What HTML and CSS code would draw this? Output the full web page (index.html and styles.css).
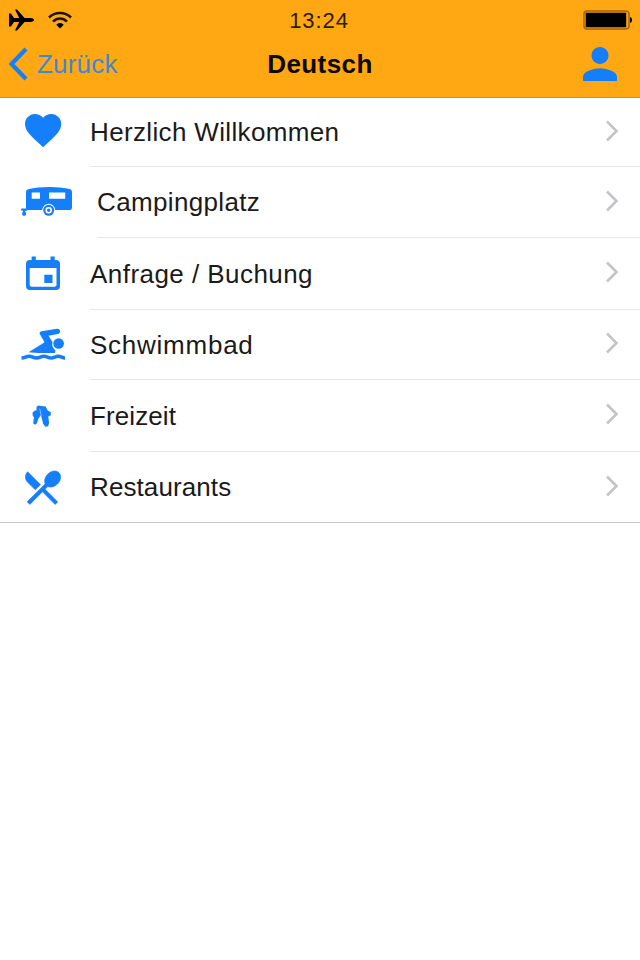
FILE: index.html
```html
<!DOCTYPE html>
<html lang="de">
<head>
    <meta charset="UTF-8">
    <meta name="viewport" content="width=device-width, initial-scale=1.0">
    <title>Deutsch</title>
    <link rel="stylesheet" href="styles.css">
</head>
<body>

<header class="header">
    <div class="status">
        <div class="status-left">
            <svg width="25" height="22" viewBox="0 0 25 22"><path d="M0 4.500h2l3 4.600h5.200L6 .5h2l7.600 8.600h6.400c2.600 0 3 1.900 3 1.900s-.4 1.900-3 1.900h-6.400L8 21.500H6l4.200-8.600H5l-3 4.600H0z"/></svg>
            <svg width="24" height="18" viewBox="0 0 24 18"><g fill="none" stroke="#1c1300" stroke-width="2.500"><path d="M1 6.500C7 .4 17 .4 23 6.500"/><path d="M5 10.600c4-4 10-4 14 0"/></g><path d="M12 17.500l-3.700-3.700c2.200-2.400 5.200-2.400 7.400 0z"/></svg>
        </div>
        <div class="time">13:24</div>
        <svg class="battery" width="50" height="20" viewBox="0 0 50 20"><rect x="1" y="1" width="45" height="18" rx="3" fill="none" stroke="#a96200" stroke-width="1.500"/><rect x="2.700" y="2.700" width="40.500" height="14.600" fill="#000"/><path d="M47 7c2.700.5 2.700 5.500 0 6z"/></svg>
    </div>
    <div class="navbar">
        <div class="back">
            <svg width="20" height="34" viewBox="0 0 20 34"><path d="M18 2L3.500 17 18 32" fill="none" stroke="#147efb" stroke-width="4.200"/></svg>
            <span>Zurück</span>
        </div>
        <div class="title">Deutsch</div>
        <svg class="user" width="34" height="34" viewBox="4 4 16 16"><path d="M12 12c2.210 0 4-1.790 4-4s-1.790-4-4-4-4 1.790-4 4 1.790 4 4 4zm0 2c-2.670 0-8 1.340-8 4v2h16v-2c0-2.660-5.330-4-8-4z"/></svg>
    </div>
</header>

<div class="list">
    <div class="row first">
        <svg class="icon" viewBox="0 0 90 70"><path transform="translate(21.400 10.600) scale(1.810)" d="M12 21.350l-1.450-1.320C5.400 15.360 2 12.280 2 8.500 2 5.420 4.420 3 7.500 3c1.740 0 3.410.81 4.500 2.090C13.090 3.810 14.760 3 16.500 3 19.580 3 22 5.420 22 8.500c0 3.780-3.400 6.860-8.550 11.540L12 21.350z"/></svg>
        <div class="content">
            <span class="label">Herzlich Willkommen</span>
            <svg class="chevron" viewBox="0 0 14 22"><path d="M2 1.500l9.500 9.500L2 20.500"/></svg>
        </div>
    </div>
    <div class="row camping">
        <svg class="icon" viewBox="0 0 90 70">
            <path fill-rule="evenodd" d="M26 25q0-2 2-2.700c12-3 30-3 42-.3q2 .8 2 3v15.500q0 2.500-2 2.500H28q-2 0-2-2zM31.700 25.500v6.200H40v-6.200zM49 25.500v6.200h16.200v-6.200z"/>
            <path d="M21.200 41.500h6v2.300h-2v1.400h.8V48l-2 1-1.800-1v-2.800h.8v-1.400h-1.800z"/>
            <circle cx="48.700" cy="43.300" r="6.500" fill="#fff"/>
            <circle cx="48.700" cy="43.300" r="5.500"/>
            <circle cx="48.700" cy="43.300" r="2.500" fill="#147efb" stroke="#fff" stroke-width="1.600"/>
        </svg>
        <div class="content">
            <span class="label">Campingplatz</span>
            <svg class="chevron" viewBox="0 0 14 22"><path d="M2 1.500l9.500 9.500L2 20.500"/></svg>
        </div>
    </div>
    <div class="row tall">
        <svg class="icon" viewBox="0 0 90 70"><path fill-rule="evenodd" d="M31.600 22v-3.500h4.200V22h14.700v-3.500h4.200V22H56q4 0 4 4v22q0 4-4 4H30q-4 0-4-4V26q0-4 4-4zM29.700 30v17q0 1.700 2 1.700h22.800q2 0 2-1.700V30zM44.300 36.700h8.200v8.400h-8.200z"/></svg>
        <div class="content">
            <span class="label wide">Anfrage / Buchung</span>
            <svg class="chevron" viewBox="0 0 14 22"><path d="M2 1.500l9.500 9.500L2 20.500"/></svg>
        </div>
    </div>
    <div class="row short">
        <svg class="icon" viewBox="0 0 90 70">
            <path d="M39.500 23.500q0-1.700 2-2.200l15.500-2.500c3.700-.4 4.200 4.600.8 5.300l-9.300 1.600 4 6.300c-.8 3.500 0 5.500 3 8.500l-.5 2.500H38l-9.500-.8 13-8 3-2z"/>
            <circle cx="58.600" cy="33.500" r="5.300"/>
            <path d="M21.500 48c4 0 4-1.700 7.500-1.700s4 1.700 7.500 1.700 4-1.700 7.300-1.700 4 1.700 7.300 1.700 4-1.700 7.200-1.700 3.500 1.700 6.700 1.700" fill="none" stroke="#147efb" stroke-width="3.600"/>
        </svg>
        <div class="content">
            <span class="label wider">Schwimmbad</span>
            <svg class="chevron" viewBox="0 0 14 22"><path d="M2 1.500l9.500 9.500L2 20.500"/></svg>
        </div>
    </div>
    <div class="row tall">
        <svg class="icon" viewBox="0 0 90 70">
            <path d="M36.500 27l1.500-1.500 3.500.6 4.200.4 1.800 3.800 3.300 2v3l-2.500 1.200.8 6.500-1 3.300-2.800.5-2.200-3-1.300-5.500-1-3-2.500 3.500-1.300 4.500-2 1.500-1.800-1.200.7-6-1.300-2.300v-2.900l2-1.600 1.900-.5z"/>
            <path d="M39.700 28.500l1.600 7.500" fill="none" stroke="#8dc0fd" stroke-width="1"/>
        </svg>
        <div class="content">
            <span class="label narrow">Freizeit</span>
            <svg class="chevron" viewBox="0 0 14 22"><path d="M2 1.500l9.500 9.500L2 20.500"/></svg>
        </div>
    </div>
    <div class="row last">
        <svg class="icon" viewBox="0 0 90 70"><path transform="translate(20.400 13.300) scale(1.840)" stroke="#147efb" stroke-width="0.350" stroke-linejoin="round" d="M8.100 13.340l2.830-2.830L3.910 3.500c-1.560 1.560-1.560 4.090 0 5.660l4.190 4.180zm6.780-1.810c1.530.71 3.680.21 5.270-1.380 1.910-1.910 2.280-4.650.81-6.120-1.460-1.460-4.200-1.100-6.120.81-1.590 1.590-2.090 3.740-1.380 5.270L3.700 19.870l1.410 1.410L12 14.410l6.880 6.880 1.410-1.410L13.410 13l1.470-1.470z"/></svg>
        <div class="content">
            <span class="label narrow">Restaurants</span>
            <svg class="chevron" viewBox="0 0 14 22"><path d="M2 1.500l9.500 9.500L2 20.500"/></svg>
        </div>
    </div>
</div>

</body>
</html>
```
FILE: styles.css
```css
body {
    margin: 0;
    font-family: "Liberation Sans", Arial, sans-serif;
    background-color: #fff;
    color: #1a1a1a;
}
svg {
    display: block;
    flex-shrink: 0;
}
.header {
    box-sizing: border-box;
    height: 98px;
    background-color: #ffa814;
    border-bottom: 1px solid #d68e15;
}
.status {
    display: grid;
    grid-template-columns: 1fr auto 1fr;
    align-items: center;
    height: 40px;
    padding: 0 7px 0 9px;
}
.status-left {
    display: flex;
    align-items: center;
    gap: 14px;
}
.time {
    font-size: 22px;
    line-height: 24px;
    padding: 2px 4px 0 0;
    letter-spacing: 0.9px;
    color: #2b1d03;
}
.battery {
    justify-self: end;
}
.navbar {
    display: grid;
    grid-template-columns: 1fr auto 1fr;
    align-items: center;
    height: 48px;
    padding: 0 23px 0 8px;
}
.back {
    display: flex;
    align-items: center;
    gap: 9px;
    font-size: 26px;
    letter-spacing: 0.2px;
    color: #3f88d0;
}
.title {
    font-size: 26px;
    font-weight: bold;
    letter-spacing: 0.4px;
    padding-left: 15px;
    color: #0d0900;
}
.user {
    justify-self: end;
    fill: #147efb;
}
.list {
    border-bottom: 1px solid #c8c8c8;
}
.row {
    display: flex;
    height: 71px;
}
.row.first {
    height: 69px;
}
.row.tall {
    height: 72px;
}
.row.short {
    height: 70px;
}
.row.last {
    height: 70px;
}
.icon {
    width: 90px;
    height: 70px;
    fill: #147efb;
}
.camping .icon {
    margin-right: 7px;
}
.content {
    box-sizing: border-box;
    flex: 1;
    display: flex;
    align-items: center;
    justify-content: space-between;
    padding-right: 21px;
    border-bottom: 1px solid #e6e6e6;
}
.last .content {
    border-bottom: none;
}
.label {
    font-size: 26px;
    line-height: 30px;
    letter-spacing: 0.35px;
}
.label.wide {
    letter-spacing: 0.45px;
}
.label.wider {
    letter-spacing: 0.75px;
}
.label.narrow {
    letter-spacing: 0.1px;
}
.chevron {
    width: 14px;
    height: 22px;
    margin-bottom: 3px;
    fill: none;
    stroke: #c4c4c8;
    stroke-width: 2.6;
}
```
